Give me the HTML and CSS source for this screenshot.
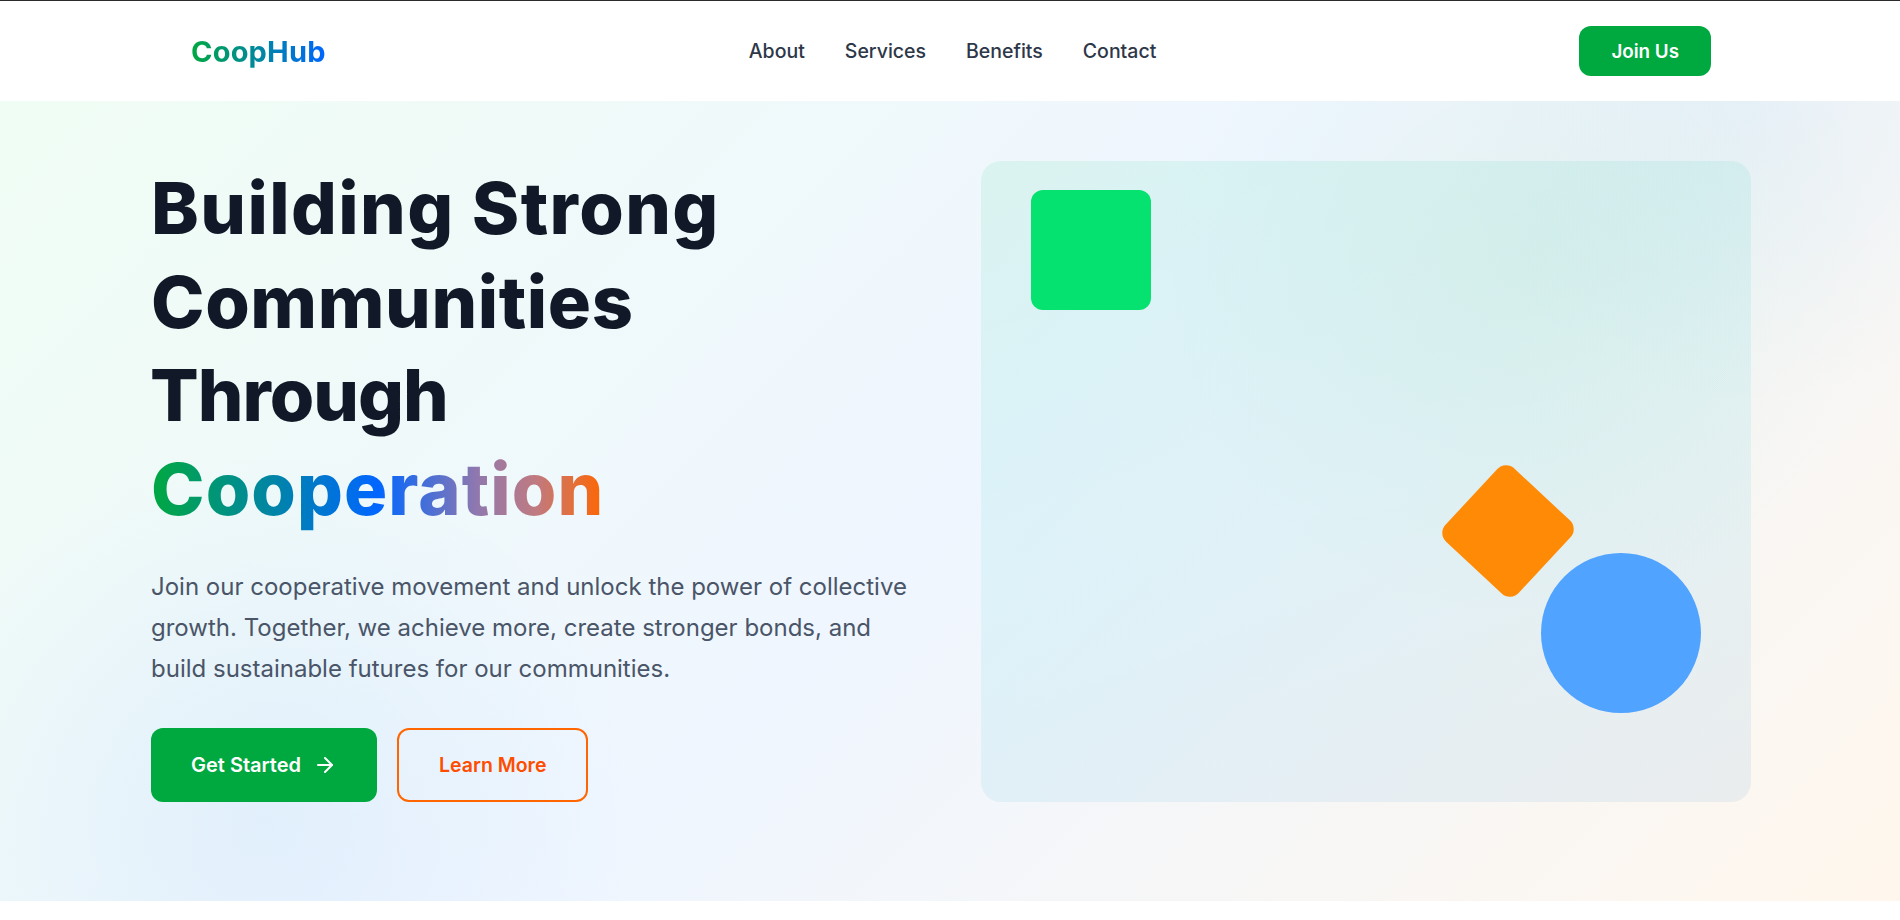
FILE: index.html
```html
<!DOCTYPE html>
<html lang="en">
<head>
    <meta charset="UTF-8">
    <meta name="viewport" content="width=device-width, initial-scale=1.0">
    <title>CoopHub</title>
    <link rel="stylesheet" href="styles.css">
</head>
<body>
    <header class="site-header">
        <nav class="navbar">
            <a class="logo" href="#">CoopHub</a>
            <ul class="nav-links">
                <li><a href="#">About</a></li>
                <li><a href="#">Services</a></li>
                <li><a href="#">Benefits</a></li>
                <li><a href="#">Contact</a></li>
            </ul>
            <a class="join-btn" href="#">Join Us</a>
        </nav>
    </header>

    <section class="hero">
        <div class="hero-inner">
            <div class="hero-copy">
                <h1>
                    <span class="line line-building">Building Strong</span>
                    <span class="line line-communities">Communities</span>
                    <span class="line line-through">Through</span>
                    <span class="line gradient-text">Cooperation</span>
                </h1>
                <p>Join our cooperative movement and unlock the power of collective growth. Together, we achieve more, create stronger bonds, and build sustainable futures for our communities.</p>
                <div class="hero-actions">
                    <a class="btn btn-primary" href="#">
                        Get Started
                        <svg width="24" height="24" viewBox="0 0 24 24" fill="none" stroke="currentColor" stroke-width="2" stroke-linecap="round" stroke-linejoin="round"><path d="M5 12h14"/><path d="m12 5 7 7-7 7"/></svg>
                    </a>
                    <a class="btn btn-outline" href="#">Learn More</a>
                </div>
            </div>
            <div class="hero-visual">
                <div class="shape shape-square"></div>
                <div class="shape shape-diamond"></div>
                <div class="shape shape-circle"></div>
            </div>
        </div>
    </section>
</body>
</html>
```

FILE: styles.css
```css
* {
    box-sizing: border-box;
}
body {
    margin: 0;
    height: 920px;
    overflow: hidden;
    font-family: Inter, "Liberation Sans", sans-serif;
    background: #ffffff;
    color: #111827;
}
a {
    text-decoration: none;
}

/* header */
.site-header {
    height: 101px;
    background: #ffffff;
    border-top: 1px solid #2b2b2b;
}
.navbar {
    width: 1600px;
    height: 100px;
    margin-left: 151px;
    padding: 0 40px;
    display: flex;
    align-items: center;
    justify-content: space-between;
}
.logo {
    font-size: 29px;
    font-weight: 700;
    letter-spacing: 0.2px;
    background: linear-gradient(90deg, #00a840, #0066ff);
    -webkit-background-clip: text;
    background-clip: text;
    color: transparent;
}
.nav-links {
    display: flex;
    gap: 40px;
    list-style: none;
    margin: 0;
    padding: 0;
}
.nav-links a {
    font-size: 19.5px;
    font-weight: 500;
    color: #2d3748;
}
.join-btn {
    display: flex;
    align-items: center;
    height: 50px;
    padding: 0 32px;
    border-radius: 12px;
    background: #00a840;
    color: #ffffff;
    font-size: 18.8px;
    font-weight: 600;
}

/* hero */
.hero {
    height: 800px;
    padding: 60px 0 99px;
    background:
        radial-gradient(circle at 14% 90%, rgba(0, 102, 255, 0.06), transparent 21%),
        radial-gradient(circle at 80% 20%, rgba(0, 168, 67, 0.05), transparent 22%),
        radial-gradient(circle at 92% 0%, rgba(0, 140, 220, 0.05), transparent 16%),
        linear-gradient(135deg, #f0fdf4 0%, #eff6ff 50%, #fff7ed 100%);
}
.hero-inner {
    width: 1600px;
    height: 641px;
    margin-left: 151px;
    display: grid;
    grid-template-columns: 1fr 1fr;
    gap: 60px;
}
.hero-copy h1 {
    margin: 0 0 32px;
    font-size: 72px;
    font-weight: 800;
    line-height: 1.3;
    color: #111827;
}
.line {
    display: block;
}
.line-building {
    letter-spacing: 1.4px;
}
.line-communities {
    letter-spacing: 0.6px;
}
.line-through {
    letter-spacing: -1px;
    margin-left: -1px;
}
.gradient-text {
    width: fit-content;
    letter-spacing: 1.1px;
    background: linear-gradient(90deg, #00a840, #0066ff 50%, #9078ae 72%, #c07a80 85%, #ff6600);
    -webkit-background-clip: text;
    background-clip: text;
    color: transparent;
}
.hero-copy p {
    margin: 0 0 38px;
    font-size: 24px;
    line-height: 1.7;
    color: #4a5568;
}
.hero-actions {
    display: flex;
    gap: 20px;
}
.btn {
    display: flex;
    align-items: center;
    gap: 12px;
    height: 74px;
    padding: 0 40px;
    border-radius: 12px;
    font-weight: 600;
}
.btn-primary {
    font-size: 20px;
    background: #00a840;
    color: #ffffff;
}
.btn-outline {
    font-size: 19.5px;
    border: 2px solid #ff6600;
    color: #ff4d00;
}

/* right panel with the floating shapes */
.hero-visual {
    position: relative;
    border-radius: 20px;
    background: linear-gradient(160deg, rgba(0, 200, 110, 0.09), rgba(0, 190, 210, 0.08) 50%, rgba(0, 100, 200, 0.07));
}
.shape {
    position: absolute;
}
.shape-square {
    top: 29px;
    left: 50px;
    width: 120px;
    height: 120px;
    border-radius: 12px;
    background: #05e26f;
}
.shape-diamond {
    top: 320px;
    left: 477px;
    width: 100px;
    height: 100px;
    border-radius: 12px;
    background: #ff8a05;
    transform: rotate(43deg);
}
.shape-circle {
    top: 392px;
    left: 560px;
    width: 160px;
    height: 160px;
    border-radius: 50%;
    background: #50a3ff;
}
```
